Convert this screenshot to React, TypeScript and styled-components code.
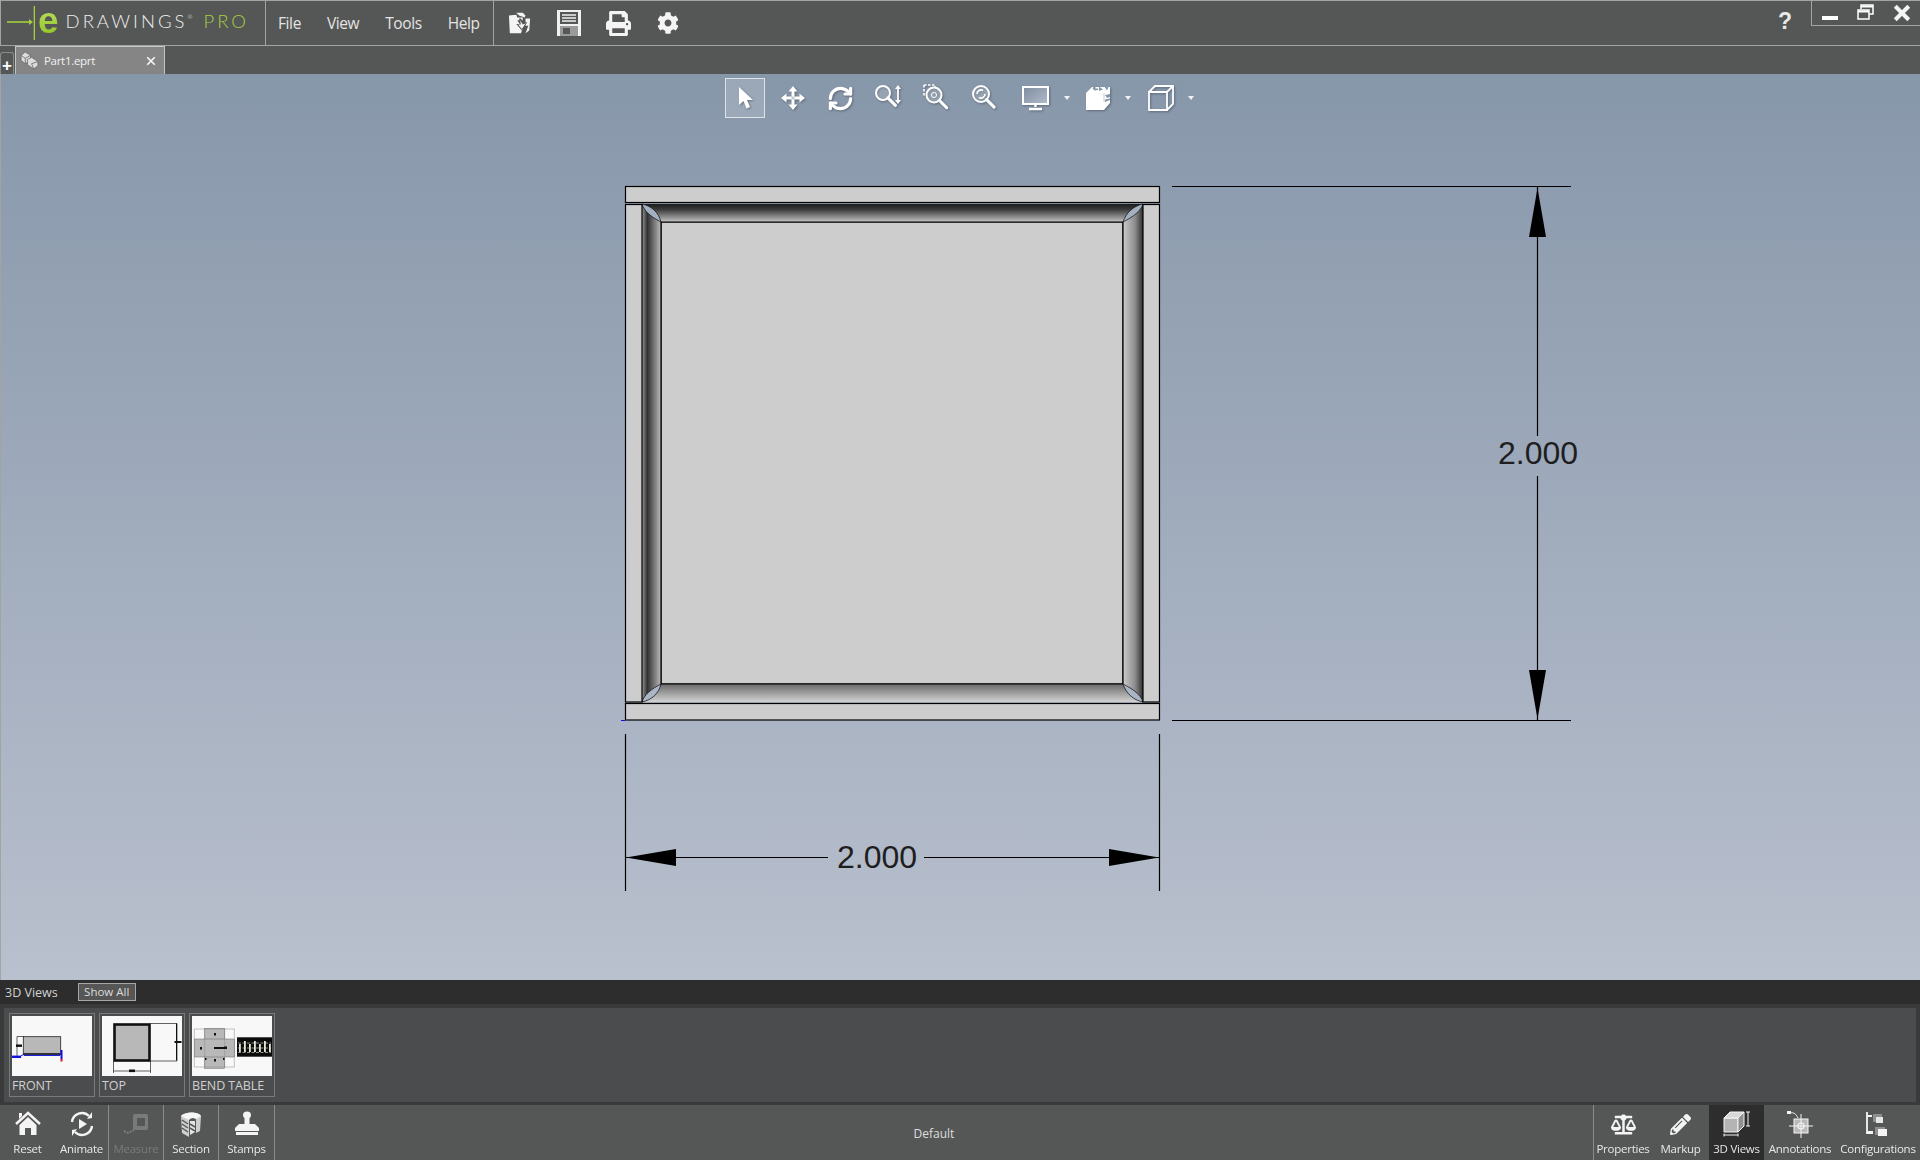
import React from "react";
import styled, { createGlobalStyle } from "styled-components";
import { FaCog, FaPrint, FaBalanceScale, FaPencilAlt } from "react-icons/fa";
import { RefreshCw } from "lucide-react";

const GlobalStyle = createGlobalStyle`
  html, body { margin: 0; padding: 0; background: #555756; }
  body { font-family: "Open Sans", "Noto Sans", "Liberation Sans", sans-serif; }
`;

const Page = styled.div`
  width: 1920px;
  height: 1160px;
  display: flex;
  flex-direction: column;
  overflow: hidden;
  background: #555756;
  color: #e6e6e6;
`;

const TitleBar = styled.div`
  height: 44px;
  flex: none;
  display: flex;
  background: #555756;
  border-top: 1px solid #a3a3a3;
  border-bottom: 1px solid #a3a3a3;
`;

const Logo = styled.div`
  width: 266px;
  flex: none;
  display: flex;
  align-items: center;
  border-right: 1px solid #a3a3a3;
  border-left: 1px solid #a3a3a3;
  box-sizing: border-box;
  padding-left: 5px;
`;

const LogoMark = styled.svg`
  flex: none;
`;

const LogoE = styled.span`
  font-family: "Liberation Sans", sans-serif;
  font-weight: 700;
  font-size: 37px;
  line-height: 37px;
  margin: -6px 0 0 3px;
  background: linear-gradient(#c4e36a, #8cc21f);
  -webkit-background-clip: text;
  background-clip: text;
  color: transparent;
`;

const LogoWord = styled.span<{ $green?: boolean }>`
  font-family: "Lato", "Open Sans", sans-serif;
  font-weight: 300;
  font-size: 18.5px;
  white-space: nowrap;
  letter-spacing: ${(p) => (p.$green ? "3px" : "3px")};
  color: ${(p) => (p.$green ? "#a6cf3c" : "#eeeeee")};
  margin: -4px 0 0 ${(p) => (p.$green ? "11px" : "7px")};
`;

const Reg = styled.sup`
  font-size: 6px;
  letter-spacing: 0;
  vertical-align: 9px;
`;

const Menu = styled.div`
  width: 228px;
  flex: none;
  display: flex;
  align-items: center;
  padding-left: 12px;
  gap: 26px;
  box-sizing: border-box;
  border-right: 1px solid #a3a3a3;
`;

const MenuItem = styled.span`
  font-size: 15.5px;
  color: #e4e4e4;
  letter-spacing: -0.4px;
`;

const QuickIcons = styled.div`
  display: flex;
  align-items: center;
  padding-left: 1px;
`;

const QuickIcon = styled.div`
  width: 49.5px;
  height: 44px;
  display: flex;
  align-items: center;
  justify-content: center;
  color: #f4f4f4;
`;

const Spacer = styled.div`
  flex: 1;
`;

const Help = styled.div`
  width: 20px;
  margin-top: 5px;
  font-family: "Liberation Sans", sans-serif;
  font-size: 23px;
  font-weight: 700;
  color: #e8e8e8;
  line-height: 30px;
  margin-right: 13px;
`;

const WindowBox = styled.div`
  width: 109px;
  height: 25px;
  box-sizing: border-box;
  display: flex;
  border-left: 1px solid #a3a3a3;
  border-bottom: 1px solid #a3a3a3;
`;

const WindowButton = styled.div`
  width: 36px;
  display: flex;
  align-items: center;
  justify-content: center;
  color: #fff;
`;

const TabStrip = styled.div`
  height: 28px;
  flex: none;
  display: flex;
  align-items: flex-end;
  background: #555756;
`;

const NewTab = styled.div`
  width: 14px;
  height: 22px;
  box-sizing: border-box;
  border: 1px solid #8a8a8a;
  border-bottom: none;
  border-radius: 3px 3px 0 0;
  font-family: "Liberation Sans", sans-serif;
  font-weight: 700;
  font-size: 17px;
  line-height: 25px;
  text-align: center;
  color: #fff;
  margin-right: 1px;
`;

const Tab = styled.div`
  width: 150px;
  height: 28px;
  box-sizing: border-box;
  display: flex;
  align-items: center;
  background: #858585;
  border: 1px solid #c4c4c4;
  border-bottom: none;
  padding-left: 4px;
  color: #f2f2f2;
`;

const TabLabel = styled.span`
  font-size: 11.5px;
  margin-left: 5px;
  letter-spacing: -0.3px;
  flex: 1;
`;

const TabClose = styled.span`
  display: flex;
  margin-right: 8px;
`;

const Viewport = styled.div`
  flex: 1;
  position: relative;
  background: linear-gradient(#8797aa, #b9c0ce);
  border-left: 1px solid #a3a3a3;
  display: flex;
  flex-direction: column;
  align-items: center;
`;

const Canvas = styled.svg`
  position: absolute;
  left: -1px;
  top: 0;
`;

const ViewTools = styled.div`
  position: relative;
  z-index: 1;
  margin: 4px 0 0 -3px;
  height: 40px;
  display: flex;
  color: #fff;
`;

const ViewTool = styled.div<{ $wide?: boolean }>`
  width: ${(p) => (p.$wide ? "63px" : "48px")};
  height: 40px;
  display: flex;
  align-items: center;
  justify-content: ${(p) => (p.$wide ? "flex-start" : "center")};
  padding-left: ${(p) => (p.$wide ? "13px" : "0")};
  box-sizing: border-box;
  svg {
    filter: drop-shadow(1px 1px 1px rgba(40, 50, 60, 0.45));
  }
`;

const ActiveFrame = styled.div`
  width: 40px;
  height: 40px;
  box-sizing: border-box;
  display: flex;
  align-items: center;
  justify-content: center;
  background: rgba(255, 255, 255, 0.16);
  border: 1px solid #dfe3e8;
`;

const Caret = styled.span`
  width: 0;
  height: 0;
  margin-left: 14px;
  border-left: 3.5px solid transparent;
  border-right: 3.5px solid transparent;
  border-top: 4px solid #f2f2f2;
`;

const ViewsHeader = styled.div`
  height: 24px;
  flex: none;
  display: flex;
  align-items: center;
  background: #2d2d2d;
  padding-left: 5px;
  font-size: 12.5px;
  color: #d2d2d2;
`;

const ShowAll = styled.div`
  margin-left: 20px;
  width: 58px;
  height: 18px;
  box-sizing: border-box;
  border: 1px solid #a6a6a6;
  background: #565656;
  font-size: 11.5px;
  line-height: 16px;
  text-align: center;
  color: #dcdcdc;
`;

const Gallery = styled.div`
  height: 101px;
  flex: none;
  box-sizing: border-box;
  background: #4b4c4e;
  border: solid #3a3a3a;
  border-width: 4px 4px 3px 4px;
  padding: 5px 5px;
  display: flex;
  gap: 4px;
`;

const ViewCard = styled.div`
  width: 86px;
  height: 84px;
  box-sizing: border-box;
  border: 1px solid #7a7a7a;
  padding: 2px 2px 0;
`;

const ViewImage = styled.svg`
  display: block;
  width: 80px;
  height: 60px;
  background: #f8f8f8;
`;

const ViewName = styled.div`
  font-size: 12.5px;
  color: #d0d0d0;
  line-height: 20px;
  white-space: nowrap;
  letter-spacing: -0.1px;
`;

const BottomBar = styled.div`
  height: 55px;
  flex: none;
  display: flex;
  background: #555756;
`;

const BarGroup = styled.div`
  display: flex;
`;

const StatusText = styled.div`
  flex: 1;
  font-size: 12px;
  color: #dedede;
  text-align: center;
  line-height: 58px;
`;

const BarButton = styled.div<{ $w: number; $sep?: boolean; $active?: boolean; $off?: boolean }>`
  width: ${(p) => p.$w}px;
  box-sizing: border-box;
  display: flex;
  flex-direction: column;
  align-items: center;
  padding-top: 3px;
  background: ${(p) => (p.$active ? "#2d2d2d" : "transparent")};
  border-right: ${(p) => (p.$sep ? "1px solid #8b8b8b" : "none")};
  color: ${(p) => (p.$off ? "#7d7d7d" : "#f4f4f4")};
`;

const BarIcon = styled.div`
  height: 32px;
  display: flex;
  align-items: center;
  justify-content: center;
`;

const BarLabel = styled.div`
  font-size: 11.5px;
  line-height: 18px;
  letter-spacing: -0.25px;
  white-space: nowrap;
  color: inherit;
  opacity: 0.92;
`;

const Divider = styled.div`
  width: 1px;
  background: #8b8b8b;
`;

/* logo arrow */
const LogoArrow = () => (
  <LogoMark width="29" height="36" viewBox="0 0 29 36">
    <path d="M1 17h24" stroke="#a6cf3c" strokeWidth="1.6" />
    <path d="M23 14l4 3-4 3z" fill="#a6cf3c" />
    <path d="M28.5 1v34" stroke="#a6cf3c" strokeWidth="1.6" />
  </LogoMark>
);

const OpenIcon = () => (
  <svg width="24" height="24" viewBox="0 0 26 26" fill="#f4f4f4">
    <path d="M1 5l8-1 1 3 6 0v3l-6 0 6 9-2 5H2z" />
    <path d="M9 2l7 0 3 3-1 2-6-2z" />
    <path d="M19 8h5l-1 13-4 3 3-8-3 0z" />
    <path d="M12 8l2 0 3 5 4-1-6 9-6-7 4 0z" fill="#555756" />
    <path d="M13 10l3 4.500 3-1-4 6-4-4.800 3 0z" fill="#f4f4f4" />
  </svg>
);

const SaveIcon = () => (
  <svg width="24" height="26" viewBox="0 0 24 26">
    <rect x="0" y="0" width="24" height="26" fill="#f0f0f0" />
    <rect x="3" y="2" width="18" height="12" fill="#555756" />
    <path d="M5 5h14M5 8h14M5 11h14" stroke="#f0f0f0" strokeWidth="1.4" />
    <rect x="3" y="16" width="18" height="10" fill="#9a9a9a" />
    <rect x="6" y="18" width="7" height="6" fill="#555756" />
  </svg>
);

const CursorIcon = () => (
  <svg width="24" height="28" viewBox="0 0 24 28" fill="#fff">
    <path d="M6 3v18l4.500-4 3 7.500 3.500-1.500-3-7 6 0z" />
  </svg>
);

const MoveIcon = () => (
  <svg width="24" height="24" viewBox="0 0 24 24" fill="#fff">
    <path d="M12 0l4.500 5.500H13.500V10.500H18.500V7.500L24 12l-5.500 4.500V13.500H13.500V18.500H16.500L12 24l-4.500-5.500H10.500V13.500H5.500V16.500L0 12l5.500-4.500V10.500H10.500V5.500H7.500z" />
    <rect x="10.500" y="10.500" width="3" height="3" fill="#8797aa" opacity="0.5" />
  </svg>
);

const ZoomLens = ({ cx = 10, cy = 10, r = 7 }: { cx?: number; cy?: number; r?: number }) => (
  <g>
    <circle cx={cx} cy={cy} r={r} fill="rgba(255,255,255,.18)" stroke="#fff" strokeWidth="2" />
    <path d={`M${cx + r * 0.7} ${cy + r * 0.7}l7.500 7.500`} stroke="#fff" strokeWidth="3" strokeLinecap="round" />
  </g>
);

const ZoomFitIcon = () => (
  <svg width="30" height="28" viewBox="0 0 30 28">
    <ZoomLens cx={9} cy={9} r={7} />
    <path d="M24 3v15" stroke="#fff" strokeWidth="1.8" />
    <path d="M21 5l3-4 3 4zM21 16l3 4 3-4z" fill="#fff" />
  </svg>
);

const ZoomAreaIcon = () => (
  <svg width="28" height="28" viewBox="0 0 28 28">
    <path d="M1 1h11v2M1 1v11" fill="none" stroke="#fff" strokeWidth="1.600" strokeDasharray="2.500 1.500" />
    <ZoomLens cx={11} cy={11} r={7.500} />
    <circle cx="11" cy="11" r="2.500" fill="none" stroke="#fff" strokeWidth="1" />
  </svg>
);

const ZoomPrevIcon = () => (
  <svg width="28" height="28" viewBox="0 0 28 28">
    <ZoomLens cx={10} cy={10} r={8} />
    <path d="M6 10a4 4 0 0 1 6-3.500M14 10a4 4 0 0 1-6 3.500" fill="none" stroke="#fff" strokeWidth="1.600" />
  </svg>
);

const DisplayIcon = () => (
  <svg width="28" height="26" viewBox="0 0 28 26">
    <defs>
      <linearGradient id="screen" x1="0" y1="0" x2="1" y2="1">
        <stop offset="0" stopColor="#7d8ca0" />
        <stop offset="1" stopColor="#b2bcc9" />
      </linearGradient>
    </defs>
    <rect x="1" y="2" width="25" height="17" fill="url(#screen)" stroke="#fff" strokeWidth="2" />
    <path d="M13.500 19v3M7 24h13" stroke="#fff" strokeWidth="2.400" />
  </svg>
);

const SectionViewIcon = () => (
  <svg width="26" height="26" viewBox="0 0 26 26">
    <path d="M1 8L7 2H25V18L19 25H1Z" fill="#fff" />
    <path d="M9 0.500h1.500v3H13V5L9.500 5.500 7.500 3.500z" fill="#8797aa" />
    <path d="M14 1.500l4 3-4 1.500zM19 1l5 0-2 4.500z" fill="#8797aa" />
    <path d="M20 10l5-1v3l-3 1zM20 17l5-2v-1.500l-5 1z" fill="#8797aa" />
    <path d="M19 8v9" stroke="#c4ccd6" strokeWidth="1" />
  </svg>
);

const CubeIcon = () => (
  <svg width="26" height="26" viewBox="0 0 26 26" fill="none" stroke="#fff" strokeWidth="1.800">
    <path d="M1 7h18v18H1zM1 7l6-6h18v18l-6 6M19 7l6-6" />
  </svg>
);

const HomeIcon = () => (
  <svg width="26" height="26" viewBox="0 0 26 26" fill="#f4f4f4">
    <path d="M1 13L13 2l12 11" fill="none" stroke="#f4f4f4" strokeWidth="2.400" />
    <path d="M4 2h3v3l-3 3z" />
    <path d="M13 6l8.500 8v10H16v-7h-6v7H4.500V14z" />
  </svg>
);

const AnimateIcon = () => (
  <svg width="26" height="26" viewBox="0 0 26 26" fill="none" stroke="#f4f4f4" strokeWidth="2.400">
    <path d="M3 11A10 10 0 0 1 20 5" />
    <path d="M23 15A10 10 0 0 1 6 21" />
    <path d="M18 8l5-1V1zM8 18l-5 1v6z" fill="#f4f4f4" stroke="none" />
    <path d="M10 8l8 5-8 5z" fill="#f4f4f4" stroke="none" />
  </svg>
);

const MeasureIcon = () => (
  <svg width="26" height="24" viewBox="0 0 26 24">
    <rect x="10" y="2" width="15" height="16" rx="2" fill="#7a7a7a" />
    <rect x="14" y="6" width="8" height="8" fill="#555756" />
    <path d="M1 19l4 2 6-3 0-4" fill="none" stroke="#7a7a7a" strokeWidth="2" strokeDasharray="2 1" />
  </svg>
);

const SectionIcon = () => (
  <svg width="22" height="27" viewBox="0 0 22 27">
    <path d="M1 5C4 1 18 0 21 5L20 20 16 22V8C13 6 10 7 9 9V26L2 22Z" fill="#cfcfcf" />
    <path d="M1 5C5 1 17 0 21 5L16 8C13 6 10 7 9 9Z" fill="#f6f6f6" />
    <path d="M9 9H16V22L9 26Z" fill="#555756" />
    <path d="M10 10H15V21L10 24Z" fill="#e4e4e4" />
    <path d="M2 9l6 4M2 13l6 4M2 17l6 4M10 13l5 3M10 17l5 3" stroke="#555756" strokeWidth="1.500" />
  </svg>
);

const StampIcon = () => (
  <svg width="26" height="26" viewBox="0 0 26 26" fill="#f4f4f4">
    <ellipse cx="13" cy="4" rx="4" ry="3.500" />
    <rect x="10.500" y="7" width="5" height="6" />
    <path d="M5 13h16l4 4v3H1v-3z" />
    <rect x="2" y="21" width="22" height="3" />
  </svg>
);

const Views3DIcon = () => (
  <svg width="28" height="28" viewBox="0 0 28 28">
    <path d="M1 8h14v14H1z" fill="#b4b4b4" stroke="#f4f4f4" />
    <path d="M1 8l6-6h14l-6 6z" fill="#d8d8d8" stroke="#f4f4f4" />
    <path d="M15 8l6-6v14l-6 6z" fill="#8f8f8f" stroke="#f4f4f4" />
    <path d="M25 2v14M23 2h4M23 16h4M1 25h14M1 23.500v3M15 23.500v3" stroke="#f4f4f4" strokeWidth="1" />
  </svg>
);

const AnnotationIcon = () => (
  <svg width="28" height="28" viewBox="0 0 28 28">
    <rect x="8" y="9" width="14" height="14" fill="#b9b9b9" stroke="#f4f4f4" />
    <path d="M15 4v24M3 16h24" stroke="#f4f4f4" strokeWidth="1" />
    <circle cx="15" cy="16" r="3" fill="none" stroke="#f4f4f4" strokeWidth="1.200" />
    <path d="M4 3c4-1 6 1 8 5" fill="none" stroke="#f4f4f4" strokeWidth="1" />
    <rect x="1" y="1" width="4" height="3" fill="#f4f4f4" />
  </svg>
);

const ConfigIcon = () => (
  <svg width="26" height="28" viewBox="0 0 26 28">
    <path d="M2 2v22M2 6h5M2 22h6" stroke="#f4f4f4" strokeWidth="1.800" />
    <rect x="2" y="21" width="6" height="3" fill="#f4f4f4" />
    <rect x="8" y="4" width="9" height="8" fill="#8e8e8e" />
    <rect x="11" y="7" width="7" height="6" fill="#e6e6e6" />
    <rect x="10" y="17" width="10" height="8" fill="#8e8e8e" />
    <rect x="13" y="19" width="9" height="7" fill="#f4f4f4" />
  </svg>
);

const TabPartIcon = () => (
  <svg width="19" height="19" viewBox="0 0 18 18" fill="#dcdcdc" stroke="#6b6b6b" strokeWidth="0.800">
    <path d="M1 4l4-3 5 3v5l-5 3-4-3z" />
    <path d="M7 8l4-2 6 4v4l-4 3-6-4z" />
    <path d="M1 4l4 3 5-3M5 7v5M11 12l2 5M11 12l6-2" fill="none" />
  </svg>
);

const FrontThumb = () => (
  <ViewImage viewBox="0 0 80 60">
    <rect x="11.300" y="20.700" width="37.400" height="18" fill="#b8b8b8" stroke="#222" strokeWidth="0.800" />
    <rect x="11.500" y="37" width="37" height="2.200" fill="#333" />
    <path d="M5 20.500v20M5 20.500h7" stroke="#222" strokeWidth="0.700" />
    <rect x="4" y="28.500" width="6" height="2.400" fill="#111" />
    <path d="M0 40.800h9" stroke="#1010e0" strokeWidth="2.400" />
    <path d="M9 40l3-2M12 39.400h36" stroke="#1010e0" strokeWidth="1" />
    <path d="M49.500 34v9" stroke="#1010e0" strokeWidth="2" />
    <path d="M49.500 43v2.500" stroke="#e01020" strokeWidth="2" />
  </ViewImage>
);

const TopThumb = () => (
  <ViewImage viewBox="0 0 80 60">
    <rect x="12.500" y="8.500" width="35" height="36" fill="#b8b8b8" stroke="#111" strokeWidth="2.600" />
    <path d="M48 7.500h27v37.500H48" fill="none" stroke="#222" strokeWidth="0.700" />
    <rect x="74" y="7.500" width="1" height="37" fill="#111" />
    <rect x="72.500" y="25" width="7" height="2" fill="#111" />
    <path d="M11.500 45v12M48.500 45v12M11.500 55h37" stroke="#222" strokeWidth="0.700" />
    <rect x="27" y="53.500" width="6" height="2.600" fill="#111" />
  </ViewImage>
);

const tableCols = [47, 52, 57, 62, 67, 72, 77];

const BendThumb = () => (
  <ViewImage viewBox="0 0 80 60">
    <rect x="12.700" y="12.300" width="20" height="40" fill="#b8b8b8" stroke="#666" strokeWidth="0.500" />
    <rect x="2.300" y="23" width="40.400" height="18" fill="#b8b8b8" stroke="#666" strokeWidth="0.500" />
    <path d="M2.300 13h40v38h-40zM12.700 12v40M32.700 12v40" fill="none" stroke="#888" strokeWidth="0.500" />
    <rect x="22" y="31" width="12" height="2" fill="#111" />
    <rect x="32" y="30.500" width="3" height="2.500" fill="#111" />
    <rect x="8" y="31" width="2" height="2.600" fill="#111" />
    <rect x="22" y="17" width="2" height="2.500" fill="#111" />
    <rect x="22" y="43" width="2" height="2.500" fill="#111" />
    <rect x="13" y="42" width="1.500" height="2" fill="#111" />
    <rect x="31" y="42" width="1.500" height="2" fill="#111" />
    <rect x="45" y="21.300" width="35" height="19.400" fill="#0c0c0c" />
    {tableCols.map((x, i) => (
      <rect key={x} x={x} y={i % 2 ? 25 : 28} width="1.800" height={i % 2 ? 11 : 8} fill="#e8e8d8" />
    ))}
    <path d="M46 27h33M46 32h33M46 36.500h33" stroke="#e8e8d8" strokeWidth="0.600" strokeDasharray="3 1.500" />
  </ViewImage>
);

const WindowRestore = () => (
  <svg width="18" height="18" viewBox="0 0 18 18" fill="none" stroke="#fff" strokeWidth="1.500">
    <path d="M4 5V1h12v9h-4" />
    <path d="M4 2.500h12" strokeWidth="2" />
    <rect x="1" y="6" width="11" height="9" />
    <path d="M1 7.500h11" strokeWidth="2" />
  </svg>
);

const XMark = ({ size, weight }: { size: number; weight: number }) => (
  <svg width={size} height={size} viewBox="0 0 16 16">
    <path d="M2 2l12 12M14 2L2 14" stroke="#f4f4f4" strokeWidth={weight} />
  </svg>
);

const DRAW = "#000";

const DimText = ({ x, y }: { x: number; y: number }) => (
  <text x={x} y={y} textAnchor="middle" fontFamily="'Liberation Sans', sans-serif" fontSize="32" fill="#1e1e1e">
    2.000
  </text>
);

const ModelDrawing = () => (
  <Canvas width="1920" height="906" viewBox="0 74 1920 906">
    <defs>
      <linearGradient id="bendTop" x1="0" y1="0" x2="0" y2="1">
        <stop offset="0" stopColor="#1c1c1c" />
        <stop offset="0.3" stopColor="#3a3a3a" />
        <stop offset="1" stopColor="#c4c4c4" />
      </linearGradient>
      <linearGradient id="bendBottom" x1="0" y1="0" x2="0" y2="1">
        <stop offset="0" stopColor="#6a6a6a" />
        <stop offset="1" stopColor="#d2d2d2" />
      </linearGradient>
      <linearGradient id="bendLeft" x1="0" y1="0" x2="1" y2="0">
        <stop offset="0" stopColor="#999999" />
        <stop offset="0.28" stopColor="#303030" />
        <stop offset="1" stopColor="#bcbcbc" />
      </linearGradient>
      <linearGradient id="bendRight" x1="0" y1="0" x2="1" y2="0">
        <stop offset="0" stopColor="#cccccc" />
        <stop offset="0.6" stopColor="#8c8c8c" />
        <stop offset="1" stopColor="#303030" />
      </linearGradient>
    </defs>

    <rect x="661" y="222" width="462" height="462" fill="#cdcdcd" stroke={DRAW} strokeWidth="1.200" />
    <polygon points="642,204 1143,204 1123,222 661,222" fill="url(#bendTop)" />
    <polygon points="642,702 1143,702 1123,684 661,684" fill="url(#bendBottom)" />
    <polygon points="642,204 661,222 661,684 642,702" fill="url(#bendLeft)" />
    <polygon points="1143,204 1123,222 1123,684 1143,702" fill="url(#bendRight)" />
    <path d="M661 222H1123V684H661Z" fill="none" stroke={DRAW} strokeWidth="1.200" />

    <path d="M642 204C652 206 659 213 661 222C651 217 644 211 642 204Z" fill="#a3b0c2" stroke="#1a1a1a" strokeWidth="0.800" />
    <path d="M1143 204C1133 206 1126 213 1123 222C1133 217 1141 211 1143 204Z" fill="#a3b0c2" stroke="#1a1a1a" strokeWidth="0.800" />
    <path d="M642 702C652 700 659 693 661 684C651 689 644 695 642 702Z" fill="#aab6c6" stroke="#1a1a1a" strokeWidth="0.800" />
    <path d="M1143 702C1133 700 1126 693 1123 684C1133 689 1141 695 1143 702Z" fill="#aab6c6" stroke="#1a1a1a" strokeWidth="0.800" />

    <rect x="625.500" y="186.500" width="534" height="16" fill="#cdcdcd" stroke={DRAW} strokeWidth="1.200" />
    <rect x="625.500" y="703.500" width="534" height="16.500" fill="#cdcdcd" stroke={DRAW} strokeWidth="1.200" />
    <rect x="625.500" y="204.500" width="16.500" height="497.500" fill="#cdcdcd" stroke={DRAW} strokeWidth="1.200" />
    <rect x="1143" y="204.500" width="16.500" height="497.500" fill="#cdcdcd" stroke={DRAW} strokeWidth="1.200" />
    <path d="M621 720.500h4" stroke="#1010e0" strokeWidth="1" />

    <path d="M1172 186.500H1571M1172 720.500H1571" stroke={DRAW} strokeWidth="1.200" />
    <path d="M1537.500 186V436M1537.500 476V720" stroke={DRAW} strokeWidth="1.200" />
    <polygon points="1537.500,188 1546,237 1529,237" fill={DRAW} />
    <polygon points="1537.500,719 1546,670 1529,670" fill={DRAW} />
    <DimText x={1538} y={464} />

    <path d="M625.500 734V891M1159.500 734V891" stroke={DRAW} strokeWidth="1.200" />
    <path d="M626 857.500H828M924 857.500H1159" stroke={DRAW} strokeWidth="1.200" />
    <polygon points="626,857.500 676,849 676,866" fill={DRAW} />
    <polygon points="1159,857.500 1109,849 1109,866" fill={DRAW} />
    <DimText x={877} y={868} />
  </Canvas>
);

const leftButtons = [
  { label: "Reset", w: 55, icon: <HomeIcon /> },
  { label: "Animate", w: 54, sep: true, icon: <AnimateIcon /> },
  { label: "Measure", w: 55, sep: true, off: true, icon: <MeasureIcon /> },
  { label: "Section", w: 55, sep: true, icon: <SectionIcon /> },
  { label: "Stamps", w: 56, sep: true, icon: <StampIcon /> },
];

const rightButtons = [
  { label: "Properties", w: 58, icon: <FaBalanceScale size={25} /> },
  { label: "Markup", w: 57, icon: <FaPencilAlt size={21} /> },
  { label: "3D Views", w: 55, active: true, icon: <Views3DIcon /> },
  { label: "Annotations", w: 72, icon: <AnnotationIcon /> },
  { label: "Configurations", w: 84, icon: <ConfigIcon /> },
];

export default function App() {
  return (
    <Page>
      <GlobalStyle />
      <TitleBar>
        <Logo>
          <LogoArrow />
          <LogoE>e</LogoE>
          <LogoWord>
            DRAWINGS<Reg>®</Reg>
          </LogoWord>
          <LogoWord $green>PRO</LogoWord>
        </Logo>
        <Menu>
          <MenuItem>File</MenuItem>
          <MenuItem>View</MenuItem>
          <MenuItem>Tools</MenuItem>
          <MenuItem>Help</MenuItem>
        </Menu>
        <QuickIcons>
          <QuickIcon><OpenIcon /></QuickIcon>
          <QuickIcon><SaveIcon /></QuickIcon>
          <QuickIcon><FaPrint size={25} /></QuickIcon>
          <QuickIcon><FaCog size={22} /></QuickIcon>
        </QuickIcons>
        <Spacer />
        <Help>?</Help>
        <WindowBox>
          <WindowButton>
            <svg width="16" height="16" viewBox="0 0 16 16"><rect y="11" width="16" height="4" fill="#fff" /></svg>
          </WindowButton>
          <WindowButton><WindowRestore /></WindowButton>
          <WindowButton><XMark size={18} weight={3.6} /></WindowButton>
        </WindowBox>
      </TitleBar>

      <TabStrip>
        <NewTab>+</NewTab>
        <Tab>
          <TabPartIcon />
          <TabLabel>Part1.eprt</TabLabel>
          <TabClose><XMark size={10} weight={2.8} /></TabClose>
        </Tab>
      </TabStrip>

      <Viewport>
        <ModelDrawing />
        <ViewTools>
          <ViewTool><ActiveFrame><CursorIcon /></ActiveFrame></ViewTool>
          <ViewTool><MoveIcon /></ViewTool>
          <ViewTool><RefreshCw size={27} strokeWidth={2.8} /></ViewTool>
          <ViewTool><ZoomFitIcon /></ViewTool>
          <ViewTool><ZoomAreaIcon /></ViewTool>
          <ViewTool><ZoomPrevIcon /></ViewTool>
          <ViewTool $wide><DisplayIcon /><Caret /></ViewTool>
          <ViewTool $wide><SectionViewIcon /><Caret /></ViewTool>
          <ViewTool $wide><CubeIcon /><Caret /></ViewTool>
        </ViewTools>
      </Viewport>

      <ViewsHeader>
        3D Views
        <ShowAll>Show All</ShowAll>
      </ViewsHeader>
      <Gallery>
        <ViewCard><FrontThumb /><ViewName>FRONT</ViewName></ViewCard>
        <ViewCard><TopThumb /><ViewName>TOP</ViewName></ViewCard>
        <ViewCard><BendThumb /><ViewName>BEND TABLE</ViewName></ViewCard>
      </Gallery>

      <BottomBar>
        <BarGroup>
          {leftButtons.map((b) => (
            <BarButton key={b.label} $w={b.w} $sep={b.sep} $off={b.off}>
              <BarIcon>{b.icon}</BarIcon>
              <BarLabel>{b.label}</BarLabel>
            </BarButton>
          ))}
        </BarGroup>
        <StatusText>Default</StatusText>
        <BarGroup>
          <Divider />
          {rightButtons.map((b) => (
            <BarButton key={b.label} $w={b.w} $active={b.active}>
              <BarIcon>{b.icon}</BarIcon>
              <BarLabel>{b.label}</BarLabel>
            </BarButton>
          ))}
        </BarGroup>
      </BottomBar>
    </Page>
  );
}
